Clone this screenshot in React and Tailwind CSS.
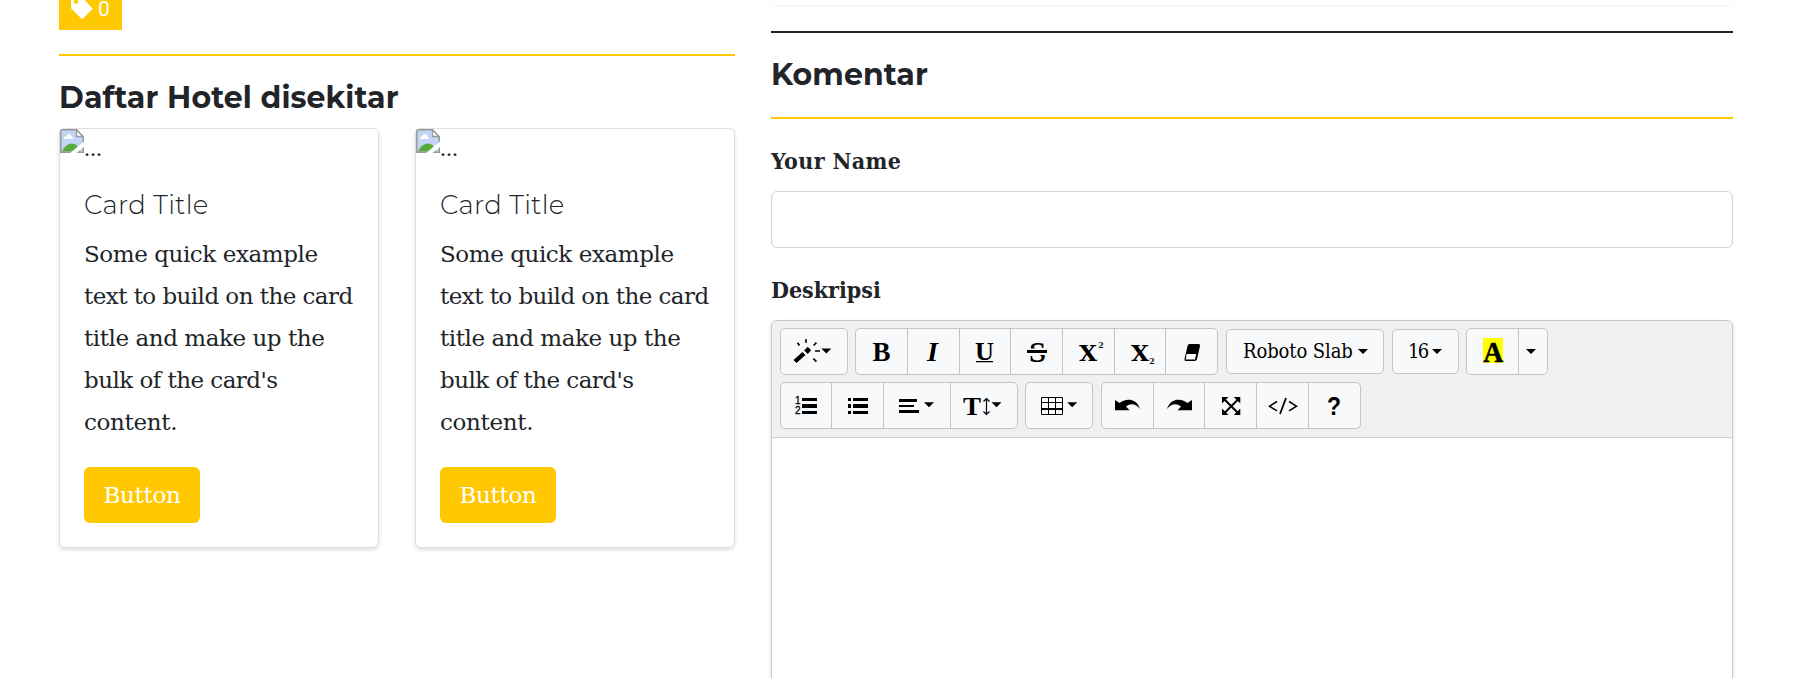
import React from "react";

const slab = "font-['Roboto_Slab','DejaVu_Serif_Condensed','DejaVu_Serif',serif]";
const slabWide = "font-['Roboto_Slab','DejaVu_Serif',serif]";
const display = "font-['Montserrat','Inter',sans-serif]";

const caret = (x, y) => <path d={`M${x} ${y}h10l-5 5z`} />;

function Glyph({ w, h = 45, children }) {
  return (
    <svg width={w} height={h} viewBox={`0 0 ${w} ${h}`} className="block shrink-0 fill-black" aria-hidden="true">
      {children}
    </svg>
  );
}

const serif = "font-['Liberation_Serif',serif] font-bold";
const dejavu = "font-['DejaVu_Serif',serif] font-bold";

function Letter({ x, y, size, len, className = serif, children }) {
  return (
    <text x={x} y={y} fontSize={size} textLength={len} lengthAdjust="spacingAndGlyphs" className={className}>
      {children}
    </text>
  );
}

const icons = {
  magic: (
    <Glyph w={66}>
      <path d="M12.500 31l9-8 3 3-9 8z M23.200 21.500l3.500-3.700 3.500 3.500-3.500 3.700z" />
      <path
        d="M16.500 13.700l2 2.800M25 10.300v3.500M32.600 16.500l2.800-2.800M34 22h5M32.400 29.600l3 3"
        className="fill-none stroke-black"
        strokeWidth="1.700"
      />
      {caret(40.3, 19.500)}
    </Glyph>
  ),
  bold: <Glyph w={51}><Letter x={16.500} y={32} size={27} len={18}>B</Letter></Glyph>,
  italic: (
    <Glyph w={51}><Letter x={19} y={32} size={27} len={11} className="font-['Liberation_Serif',serif] font-bold italic">I</Letter></Glyph>
  ),
  underline: (
    <Glyph w={50}>
      <Letter x={15} y={30.500} size={26} len={19}>U</Letter>
      <path d="M16 32h17v1.200h-17z" />
    </Glyph>
  ),
  strike: (
    <Glyph w={51}>
      <Letter x={18} y={32.500} size={29} len={17}>S</Letter>
      <path d="M16 19.500h20v6.500h-20z" className="fill-[#f8f9fa]" />
      <path d="M16 21h20v3h-20z" />
    </Glyph>
  ),
  sup: (
    <Glyph w={51}>
      <Letter x={16} y={32} size={23} len={18} className={dejavu}>X</Letter>
      <Letter x={35.500} y={19} size={8} len={5}>2</Letter>
    </Glyph>
  ),
  sub: (
    <Glyph w={50}>
      <Letter x={16} y={32} size={23} len={18} className={dejavu}>X</Letter>
      <Letter x={34.500} y={34.500} size={8} len={5}>2</Letter>
    </Glyph>
  ),
  eraser: (
    <Glyph w={51}>
      <path d="M23.500 15h9q2 0 1.500 2l-3 13q-.5 2-2.500 2h-8.500q-2 0-1.500-2l3-13q.5-2 2-2z" />
      <path d="M20.600 25h9.600l-1.300 5.500h-9.200z" className="fill-white" />
    </Glyph>
  ),
  color: (
    <Glyph w={51}>
      <path d="M16 9h20v25h-20z" className="fill-[#ffff00]" />
      <Letter x={16.300} y={33} size={29} len={20} className="stroke-black font-['Liberation_Serif',serif] font-bold [stroke-width:0.5px]">A</Letter>
    </Glyph>
  ),
  more: <Glyph w={28}>{caret(7, 20)}</Glyph>,
  ol: (
    <Glyph w={50}>
      <path d="M21 15h15v3h-15zM21 21h15v4h-15zM21 28h15v3h-15z" />
      <text x="14" y="21" fontSize="10" className="stroke-black font-['Liberation_Sans',sans-serif] [stroke-width:0.3px]">1</text>
      <text x="14" y="31" fontSize="10" className="stroke-black font-['Liberation_Sans',sans-serif] [stroke-width:0.3px]">2</text>
    </Glyph>
  ),
  ul: (
    <Glyph w={51}>
      <path d="M21 15h15v3h-15zM21 21h15v4h-15zM21 28h15v3h-15zM16 15h3v3h-3zM16 21h3v4h-3zM16 28h3v3h-3z" />
    </Glyph>
  ),
  align: (
    <Glyph w={66}>
      <path d="M15 16h18v3h-18zM15 22h15v2h-15zM15 27h20v3h-20z" />
      {caret(40, 19.300)}
    </Glyph>
  ),
  height: (
    <Glyph w={66}>
      <Letter x={12} y={32} size={26} len={18}>T</Letter>
      <path d="M35.500 15.500v16M32.500 18.500l3-3 3 3M32.500 28.500l3 3 3-3" className="fill-none stroke-black" strokeWidth="1.200" />
      {caret(40.500, 19.300)}
    </Glyph>
  ),
  table: (
    <Glyph w={66}>
      <path d="M15.500 14.500h21v17h-21zM22.500 14.500v17M29.500 14.500v17M15.500 19.500h21" className="fill-none stroke-black" />
      <path d="M15 25h22v2h-22z" />
      {caret(41.200, 19.300)}
    </Glyph>
  ),
  undo: (
    <Glyph w={51}>
      <path d="M13 17l4.500 3c5-4.500 17-6 20.500 6-4-5.500-9.500-6-14-2.500l3.500 3.800h-14.500z" />
    </Glyph>
  ),
  redo: (
    <Glyph w={50}>
      <path d="M38 17l-4.500 3c-5-4.500-17-6-20.500 6 4-5.500 9.500-6 14-2.500l-3.500 3.800h14.500z" />
    </Glyph>
  ),
  full: (
    <Glyph w={51}>
      <path d="M17 14h6.500l-6.500 6.500zM35.300 14v6.500l-6.500-6.500zM17 32v-6.500l6.500 6.500zM35.300 32h-6.500l6.500-6.500z" />
      <path d="M19 16l14.500 14.500M33.500 16l-14.500 14.500" className="stroke-black" strokeWidth="2" />
    </Glyph>
  ),
  code: (
    <Glyph w={51}>
      <path d="M20 18.500l-7.500 4.700 7.500 4.700M32 18.500l7.500 4.700-7.500 4.700" className="fill-none stroke-black" strokeWidth="1.500" />
      <path d="M29 15l-6 16" className="stroke-black" strokeWidth="1.800" />
    </Glyph>
  ),
  help: (
    <Glyph w={51}>
      <Letter x={18} y={32} size={26} len={14} className="font-['Liberation_Sans',sans-serif] font-bold">?</Letter>
    </Glyph>
  ),
};

function Group({ names, className = "" }) {
  return (
    <div className={`flex h-[47px] divide-x divide-[#c4c4c4] overflow-hidden rounded-[5px] border border-[#c4c4c4] bg-[#f8f9fa] ${className}`}>
      {names.map((n) => (
        <button key={n} type="button" aria-label={n} className="block">
          {icons[n]}
        </button>
      ))}
    </div>
  );
}

function Select({ label, className, labelClass }) {
  return (
    <button
      type="button"
      className={`flex h-[45px] items-center rounded-[5px] border border-[#c4c4c4] bg-[#f8f9fa] text-black ${slab} ${className}`}
    >
      <span className={`whitespace-nowrap text-left leading-[43px] ${labelClass}`}>{label}</span>
      <svg width="10" height="5" viewBox="0 0 10 5" className="shrink-0" aria-hidden="true">
        {caret(0, 0)}
      </svg>
    </button>
  );
}

function BrokenImage() {
  return (
    <svg width="24" height="24" viewBox="0 0 24 24" className="block shrink-0" aria-hidden="true">
      <path d="M1 3q0-2 2-2h13l7 7v15h-22z" className="fill-[#c3d5f7]" />
      <path d="M4 10q-.5-2.500 2-2.500 1-3 3.500-2.500 2 .5 2 2.500 1.500.3 1.500 2.500z" className="fill-white" />
      <path d="M2 22.500q1.500-4 5-6.500 5-3 9.500 0l4 6.500z" className="fill-[#58ab3a]" />
      <path d="M.800 24v-21.500q0-1.700 1.700-1.700h14l6.700 7v16M0 23.300h24" className="fill-none stroke-[#999]" strokeWidth="1.500" />
      <path d="M16.500 1v6.500h6.500z" className="fill-white stroke-[#999]" strokeWidth="1.300" />
      <path d="M24 12.500v5.500l-7.500 6h-6.500z" className="fill-white" />
    </svg>
  );
}

const lines = [
  ["Some quick example", "tracking-[-0.42px]"],
  ["text to build on the card", "tracking-[-0.55px]"],
  ["title and make up the", "tracking-[-0.44px]"],
  ["bulk of the card's", "tracking-[-0.54px]"],
  ["content.", "tracking-[-0.33px]"],
];

function HotelCard() {
  return (
    <article className="h-[420px] flex-1 rounded-[6px] border border-[#dfdfdf] bg-white shadow-[0_2px_4px_rgba(0,0,0,0.13)]">
      <div className="flex h-[30px]">
        <BrokenImage />
        <span className="font-['Liberation_Serif',serif] text-[24px] leading-[38px]">...</span>
      </div>
      <div className="px-6 pt-[29px]">
        <h5 className={`h-[34px] text-[26px] font-light leading-[34px] tracking-[0.35px] ${display}`}>Card Title</h5>
        <p className={`mt-[11px] whitespace-nowrap text-[23px] leading-[42px] ${slabWide}`}>
          {lines.map(([t, c]) => (
            <span key={t} className={`block ${c}`}>{t}</span>
          ))}
        </p>
        <button type="button" className={`mt-6 h-14 w-[116px] rounded-[6px] bg-[#ffc800] text-[23px] tracking-[-0.3px] text-white ${slabWide}`}>
          Button
        </button>
      </div>
    </article>
  );
}

export default function App() {
  return (
    <main className={`flex h-[678px] gap-9 overflow-hidden bg-white pl-[59px] text-[#212529] ${slab}`}>
      <section className="w-[676px] shrink-0">
        <div className="flex h-[30px] w-[63px] bg-[#ffc800] pl-3 text-white">
          <svg width="22" height="19" viewBox="0 0 22 19" className="fill-white" aria-hidden="true">
            <path fillRule="evenodd" d="M0-3h11l10 11q.7.800 0 1.600l-9 9q-.8.700-1.600 0l-10.400-10.400zM5-.500a2.200 2.200 0 1 0 .010 0z" />
          </svg>
          <span className="ml-[5px] font-['Roboto',sans-serif] text-[21px] leading-[18px]">0</span>
        </div>
        <div className="mt-6 h-0.5 bg-[#ffc800]" />
        <h3 className={`mt-[22px] h-[50px] whitespace-nowrap text-[30px] font-bold leading-[40px] tracking-[0.1px] ${display}`}>Daftar Hotel disekitar</h3>
        <div className="flex gap-9">
          <HotelCard />
          <HotelCard />
        </div>
      </section>

      <section className="w-[962px] shrink-0">
        <div className="mt-[5px] h-0.5 bg-[#f8f9fa]" />
        <div className="mt-6 h-0.5 bg-[#212529]" />
        <h3 className={`mt-[22px] h-[62px] text-[30px] font-bold leading-[40px] tracking-[0.06px] ${display}`}>Komentar</h3>
        <div className="h-0.5 bg-[#ffc800]" />
        <label className="mt-[22px] block h-[50px] whitespace-nowrap text-[23px] font-bold leading-[40px] tracking-[0.35px]">Your Name</label>
        <input type="text" aria-label="Your Name" className="block h-[57px] w-full rounded-[6px] border border-[#ced4da]" />
        <label className="mt-[22px] block h-[50px] whitespace-nowrap text-[23px] font-bold leading-[40px]">Deskripsi</label>
        <div className="h-[420px] rounded-[6px] border border-[#c8c8c8] bg-white shadow-[0_2px_4px_rgba(0,0,0,0.15)]">
          <div className="h-[117px] rounded-t-[5px] border-b border-[#cfcfcf] bg-[#f0f0f0] pl-2 pt-[7px]">
            <div className="flex items-start">
              <Group names={["magic"]} />
              <Group names={["bold", "italic", "underline", "strike", "sup", "sub", "eraser"]} className="ml-[7px]" />
              <Select label="Roboto Slab" className="ml-2 mt-px w-[158px] pl-4 text-[20px]" labelClass="w-[115px] tracking-[-0.1px]" />
              <Select label="16" className="ml-2 mt-px w-[67px] pl-[15px] text-[20px]" labelClass="w-[24px] tracking-[-1.8px]" />
              <Group names={["color", "more"]} className="ml-[7px]" />
            </div>
            <div className="mt-[7px] flex items-start">
              <Group names={["ol", "ul", "align", "height"]} />
              <Group names={["table"]} className="ml-[7px]" />
              <Group names={["undo", "redo", "full", "code", "help"]} className="ml-2" />
            </div>
          </div>
        </div>
      </section>
    </main>
  );
}
